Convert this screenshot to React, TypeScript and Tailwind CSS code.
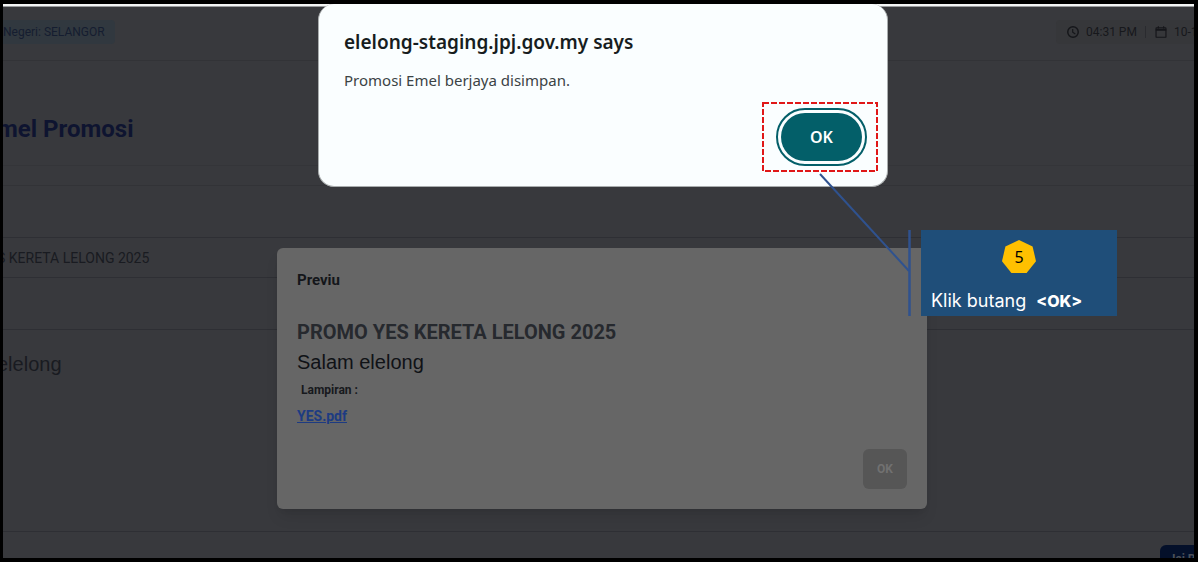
import React from "react";

function ClockIcon() {
  return (
    <svg viewBox="0 0 24 24" className="size-3.5 shrink-0" fill="none" stroke="#15161a" strokeWidth="2.500" aria-hidden="true">
      <circle cx="12" cy="12" r="9" />
      <path d="M11.500 7v5.500l4.500 3" strokeWidth="2" />
    </svg>
  );
}

function CalendarIcon() {
  return (
    <svg viewBox="0 0 24 24" className="size-3.5 shrink-0" fill="none" stroke="#15161a" strokeWidth="2" aria-hidden="true">
      <rect x="3.500" y="5" width="17" height="16" rx="1" />
      <path d="M3 8.500h18" strokeWidth="3" />
      <path d="M7.500 2v4M16.500 2v4" />
    </svg>
  );
}

function Header() {
  return (
    <header className="flex h-[54px] shrink-0 items-center justify-between border-b border-[#323337] pb-[3px] text-xs">
      <div className="flex h-6 items-center rounded-r bg-[#31383f] pr-2.5 text-[#151d30]">
        Negeri: SELANGOR
      </div>
      <div className="flex h-6 w-[138px] items-center overflow-hidden rounded-l bg-[#36373a] pl-2.5 whitespace-nowrap text-[#17181c]">
        <ClockIcon />
        <span className="ml-1.5">04:31 PM</span>
        <span className="ml-2 h-3 w-px shrink-0 bg-[#2a2b2f]" />
        <span className="ml-2 flex shrink-0 items-center gap-1.5">
          <CalendarIcon />
          10-1
        </span>
      </div>
    </header>
  );
}

function Page() {
  return (
    <main className="flex flex-1 flex-col text-[#191b21]">
      <div className="flex h-[105px] shrink-0 items-center border-b border-[#343539] pt-8">
        <h1 className="-ml-1.5 text-2xl font-bold text-[#0e1430]">mel Promosi</h1>
      </div>
      <div className="h-5 shrink-0 border-b border-[#323337]" />
      <div className="h-[52px] shrink-0 border-b border-[#2e2f34]" />
      <div className="flex h-10 shrink-0 items-center border-b border-[#2e2f34] text-sm">
        <span className="-ml-1.5">S KERETA LELONG 2025</span>
      </div>
      <div className="h-[52px] shrink-0 border-b border-[#2e2f34]" />
      <div className="flex-1 border-b border-[#2e2f34] pt-5 font-['Liberation_Sans',sans-serif] text-xl leading-7">
        <p className="-ml-1.5">elelong</p>
      </div>
      <div className="flex h-[26px] shrink-0 items-start justify-end overflow-hidden pt-[13px]">
        <button className="flex h-8 w-[34px] shrink-0 items-start overflow-hidden rounded-tl-md bg-[#04102a] pt-1.5 pl-3 text-xs font-bold whitespace-nowrap text-[#4c5058]">
          Isi B
        </button>
      </div>
    </main>
  );
}

function PreviewDialog() {
  return (
    <section
      role="dialog"
      aria-labelledby="preview-title"
      className="flex h-[261px] w-[650px] flex-col rounded-md bg-[#666] px-5 py-5 shadow-lg"
    >
      <h2 id="preview-title" className="text-[15px] leading-6 font-bold text-[#14161a]">
        Previu
      </h2>
      <h3 className="mt-6 text-xl leading-8 font-bold text-[#26292e]">PROMO YES KERETA LELONG 2025</h3>
      <p className="font-['Liberation_Sans',sans-serif] text-xl leading-7 text-[#101216]">Salam elelong</p>
      <p className="pt-1 pl-1 text-xs leading-5 font-bold text-[#17191d]">Lampiran :</p>
      <a href="#yes" className="mt-1.5 self-start text-sm leading-5 font-bold text-[#1d3b82] underline">
        YES.pdf
      </a>
      <button className="mt-auto h-10 w-11 self-end rounded-md bg-[#565656] text-xs font-bold text-[#717171]">
        OK
      </button>
    </section>
  );
}

function Callout() {
  return (
    <>
      <svg
        className="pointer-events-none absolute top-[168px] left-[500px] h-[150px] w-[95px]"
        viewBox="0 0 95 150"
        fill="none"
        stroke="#2f528f"
        strokeWidth="2"
        aria-hidden="true"
      >
        <path d="M2 2 91 99" />
        <path d="M91.500 58V144" strokeWidth="2.500" />
      </svg>
      <aside className="absolute top-[226px] left-[603px] flex h-[86px] w-[196px] flex-col items-center bg-[#1f4e79] pt-2.5 text-white">
        <div className="grid h-[33px] w-[34px] place-items-center">
          <svg viewBox="0 0 34 33" className="col-start-1 row-start-1 h-[33px] w-[34px]" aria-hidden="true">
            <path d="M17 0 30.600 6.500 34 21.200 24.600 33H9.400L0 21.200 3.400 6.500Z" fill="#ffc000" />
          </svg>
          <span className="col-start-1 row-start-1 font-['Noto_Sans',sans-serif] text-base leading-8 text-black">5</span>
        </div>
        <p className="mt-4 flex gap-2.5 self-start pl-2.5 font-['Inter',sans-serif] text-lg leading-6">
          Klik butang <strong className="text-base leading-6 font-extrabold">&lt;OK&gt;</strong>
        </p>
      </aside>
    </>
  );
}

function BrowserAlert() {
  return (
    <div className="relative w-[570px]">
      <section
        role="alertdialog"
        aria-labelledby="alert-title"
        aria-describedby="alert-text"
        className="flex h-[183px] flex-col rounded-2xl border border-t-0 border-[#a9adae] bg-[#fafeff] px-[25px] pt-6 pb-5 font-['Noto_Sans',sans-serif]"
      >
        <h2 id="alert-title" className="text-[19px] leading-7 font-semibold text-[#171d1e]">
          elelong-staging.jpj.gov.my says
        </h2>
        <p id="alert-text" className="mt-3 text-[15px] leading-6 text-[#3b4345]">
          Promosi Emel berjaya disimpan.
        </p>
        <div className="relative mt-auto -mr-[5px] self-end">
          <button className="h-[58px] w-[91px] rounded-full border-2 border-[#035f69] bg-[#fafeff] p-[3px]">
            <span className="flex h-full items-center justify-center rounded-full bg-[#035f69] text-base font-semibold text-white">
              OK
            </span>
          </button>
          <svg
            className="pointer-events-none absolute -top-1.5 -left-3.5 h-[70px] w-[116px]"
            viewBox="0 0 116 70"
            fill="none"
            aria-hidden="true"
          >
            <rect x="1" y="1" width="114" height="68" stroke="#e01818" strokeWidth="2" strokeDasharray="6 2" />
          </svg>
        </div>
      </section>
      <Callout />
    </div>
  );
}

export default function App() {
  return (
    <div className="relative flex min-h-screen flex-col overflow-hidden border-4 border-l-[3px] border-black bg-[#38393d] font-['Roboto',sans-serif]">
      <div className="h-[3px] shrink-0 border-b border-[#9a9c9e] bg-[#f4f6f6]" />
      <Header />
      <Page />
      <div className="absolute inset-0 flex justify-center pt-[244px] pl-[7px]">
        <PreviewDialog />
      </div>
      <div className="absolute inset-0 flex justify-center pl-[9px]">
        <BrowserAlert />
      </div>
    </div>
  );
}
